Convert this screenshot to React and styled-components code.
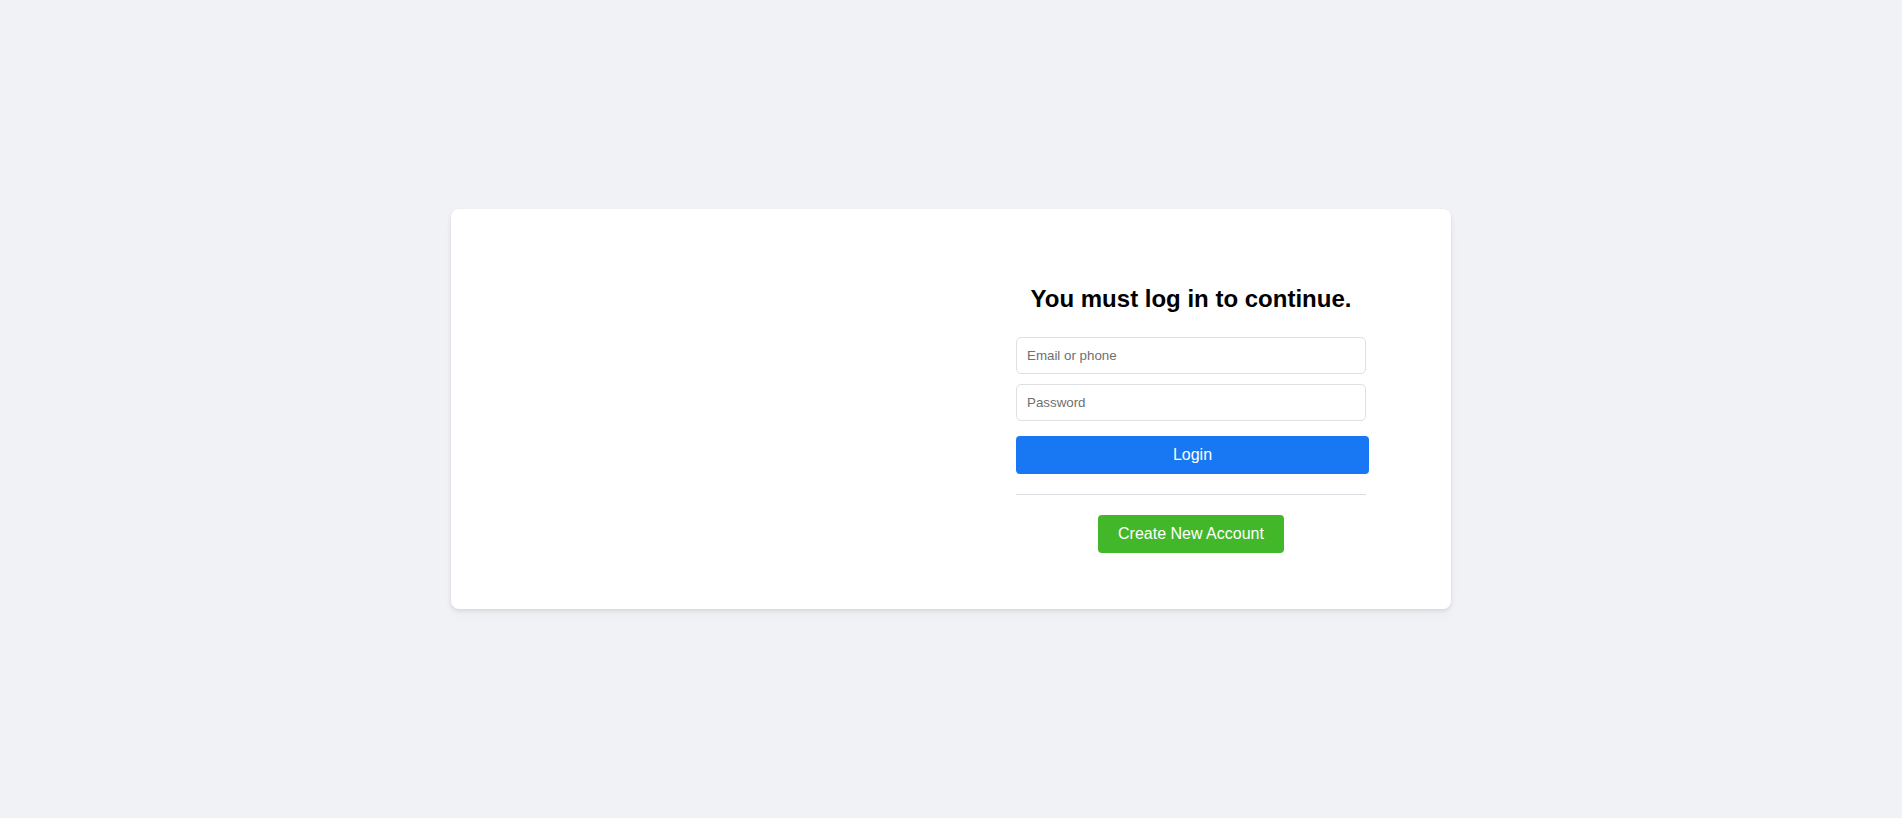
import React from "react";
import styled, { createGlobalStyle } from "styled-components";

const GlobalStyle = createGlobalStyle`
  html, body {
    margin: 0;
    padding: 0;
    height: 100%;
    background-color: #f0f2f5;
    font-family: "Liberation Sans", Arial, sans-serif;
  }
  * {
    box-sizing: border-box;
  }
`;

const Page = styled.div`
  width: 100%;
  height: 818px;
  display: flex;
  justify-content: center;
  align-items: center;
  background-color: #f0f2f5;
`;

const Card = styled.div`
  width: 1000px;
  height: 400px;
  padding: 20px;
  display: grid;
  grid-template-columns: 480px 480px;
  background-color: #ffffff;
  border-radius: 8px;
  box-shadow: 0 2px 4px rgba(0, 0, 0, 0.1), 0 8px 16px rgba(0, 0, 0, 0.02);
`;

const LeftPane = styled.div``;

const RightPane = styled.div`
  display: flex;
  flex-direction: column;
  align-items: center;
  padding-top: 56px;
`;

const Heading = styled.h2`
  margin: 0 0 24px 0;
  color: #000000;
  font-size: 24px;
  font-weight: 700;
  line-height: 28px;
  font-family: "Liberation Sans", Arial, sans-serif;
`;

const Form = styled.form`
  width: 350px;
  display: flex;
  flex-direction: column;
  align-items: flex-start;
`;

const Field = styled.input`
  width: 350px;
  height: 37px;
  margin-bottom: ${(p) => p.$gap || 10}px;
  padding: 0 10px;
  border: 1px solid #dddfe2;
  border-radius: 5px;
  font-size: 13.33px;
  font-family: "Liberation Sans", Arial, sans-serif;
  color: #1c1e21;
  outline: none;

  &::placeholder {
    color: #6f6f6f;
  }
`;

const Button = styled.button`
  height: 38px;
  border: none;
  border-radius: 4px;
  color: #ffffff;
  font-size: 16px;
  font-family: "Liberation Sans", Arial, sans-serif;
  cursor: pointer;
  background-color: ${(p) => (p.$variant === "create" ? "#42b72a" : "#1877f2")};
  width: ${(p) => (p.$variant === "create" ? "186px" : "353px")};
  align-self: ${(p) => (p.$variant === "create" ? "center" : "flex-start")};
`;

const Divider = styled.hr`
  width: 350px;
  height: 0;
  margin: 20px 0;
  border: none;
  border-top: 1px solid #dadde1;
`;

export default function App() {
  return (
    <>
      <GlobalStyle />
      <Page>
        <Card>
          <LeftPane />
          <RightPane>
            <Heading>You must log in to continue.</Heading>
            <Form onSubmit={(e) => e.preventDefault()}>
              <Field type="text" placeholder="Email or phone" />
              <Field type="password" placeholder="Password" $gap={15} />
              <Button type="submit">Login</Button>
              <Divider />
              <Button type="button" $variant="create">
                Create New Account
              </Button>
            </Form>
          </RightPane>
        </Card>
      </Page>
    </>
  );
}
